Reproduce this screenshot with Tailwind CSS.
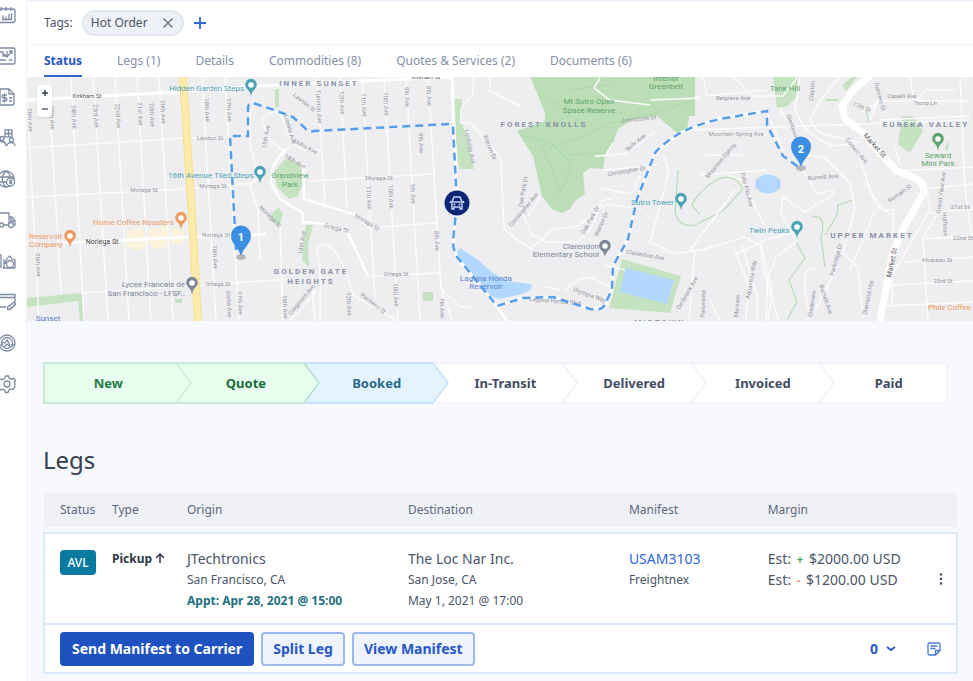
<!DOCTYPE html>
<html lang="en">
  <head>
    <meta charset="UTF-8" />
    <meta name="viewport" content="width=device-width, initial-scale=1.0" />
    <title>Order - Status</title>
    <script src="https://cdn.jsdelivr.net/npm/@tailwindcss/browser@4"></script>
  </head>
  <body class="flex min-h-screen bg-[#f7f9fe] font-['Noto_Sans',sans-serif] text-xs text-[#4a5568]">
    <!-- Sidebar -->
    <nav aria-label="Main" class="w-[27px] shrink-0 overflow-hidden border-r border-[#eef2fb] bg-white pt-[5px] text-[#7c8aa5]">
      <ul class="flex flex-col gap-[21px]">
        <li><a href="#" aria-label="Calendar" class="block h-5"><svg class="-ml-1 size-5" viewBox="0 0 20 20" fill="none" stroke="currentColor" stroke-width="1.3"><rect x="1" y="4" width="18" height="13.500" rx="2" /><path d="M5 2v4M10 2v4M15 2v4M7 14.500v-4M10 14.500v-3M13 14.500v-5.500M15.500 14.500V8M6 14.500h10" /></svg></a></li>
        <li><a href="#" aria-label="Board" class="block h-5"><svg class="-ml-1 size-5" viewBox="0 0 20 20" fill="none" stroke="currentColor" stroke-width="1.3"><rect x="1" y="2" width="18" height="16" rx="1.500" /><path d="M4 6h3v4h4V5M8 8l3 3 5-6M13 5h3v3M4 14h6M13 14h3" /></svg></a></li>
        <li><a href="#" aria-label="Quotes" class="block h-5"><svg class="-ml-1 size-5" viewBox="0 0 20 20" fill="none" stroke="currentColor" stroke-width="1.3"><path d="M4 2h9l5 5v9a2 2 0 0 1-2 2H4zM13 2v5h5M11 8H7.500a1.500 1.500 0 0 0 0 3h2a1.500 1.500 0 0 1 0 3H6M8.500 6.500v9M13 11h3M13 14h3" /></svg></a></li>
        <li><a href="#" aria-label="Customers" class="block h-5"><svg class="-ml-1 size-5" viewBox="0 0 20 20" fill="none" stroke="currentColor" stroke-width="1.3"><rect x="9" y="2" width="7" height="7" /><path d="M9 5.500h7M12.500 2v7" /><circle cx="6" cy="10.500" r="2" /><circle cx="15.500" cy="12" r="2" /><path d="M1 18c0-3 2-4.500 4.500-4.500S10 15 10 18M11 18c0-2 2-3.500 4-3.500s4 1.500 4 3.500" /></svg></a></li>
        <li><a href="#" aria-label="Rates" class="block h-5"><svg class="-ml-1 size-5" viewBox="0 0 20 20" fill="none" stroke="currentColor" stroke-width="1.3"><circle cx="10" cy="10" r="8" /><path d="M2 8h16M2 13h8M10 2c-5 5-5 11 0 16M10 2c3 2 4 4 4 6" /><circle cx="14.500" cy="13" r="4" fill="#fff" /><path d="M16 11.500h-2v1.500h1.500v1.500h-2" /></svg></a></li>
        <li><a href="#" aria-label="Trucks" class="block h-5"><svg class="-ml-1 size-5" viewBox="0 0 20 20" fill="none" stroke="currentColor" stroke-width="1.3"><path d="M13 14V3H1v12h2M8 15h4M13 7h3l3 4v4h-1M15 7v4h4" /><circle cx="5.500" cy="15" r="2" /><circle cx="15" cy="15" r="2.500" /></svg></a></li>
        <li><a href="#" aria-label="Warehouse" class="block h-5"><svg class="-ml-1 size-5" viewBox="0 0 20 20" fill="none" stroke="currentColor" stroke-width="1.3"><path d="M5 3v14M8 8v9M7 17h12M9 13c1-5 3-7 5-8l2 3 3 1v8" /><circle cx="14" cy="13" r="3.500" /></svg></a></li>
        <li><a href="#" aria-label="Forms" class="block h-5"><svg class="-ml-1 size-5" viewBox="0 0 20 20" fill="none" stroke="currentColor" stroke-width="1.3"><path d="M19 10V2.500H2V15h8M2 5.500h17" /><path d="M18 10l2 2-6 5.500h-2.500V15z" fill="currentColor" fill-opacity=".3" /></svg></a></li>
        <li><a href="#" aria-label="Reports" class="block h-5"><svg class="-ml-1 size-5" viewBox="0 0 20 20" fill="none" stroke="currentColor" stroke-width="1.3"><circle cx="11" cy="10" r="8" /><circle cx="11" cy="10" r="5.500" /><path d="M6 9l3 1 2-3 3 5M8 14l3-3 4 3M3 13l4-2M19 12h-4" /></svg></a></li>
        <li><a href="#" aria-label="Settings" class="block h-5"><svg class="-ml-1 size-5" viewBox="0 0 20 20" fill="none" stroke="currentColor" stroke-width="1.3"><path d="M9.500 2h3l.7 2.200 2.300 1 2-1 2 2.300-1 2.200.5 2.600-.5 2.300-1.800 2-2.200-.7-1.800 1.200L12 18.500H9.500l-.8-2.200-2-1.100-2.200.7-1.800-2 1-2.300L3.200 9l-.8-2 1.800-2 2.300.7L8.700 4.400z" /><circle cx="11" cy="10" r="3" /></svg></a></li>
      </ul>
    </nav>

    <main class="min-w-0 flex-1 border-t-2 border-[#f1f4fc]">
      <!-- Tags -->
      <div class="flex h-[42px] items-center bg-white pl-[17px]">
        <span>Tags:</span>
        <span class="ml-[9px] flex h-[26px] items-center gap-3.5 rounded-full border-2 border-[#e1e6ef] bg-[#eef1f7] pr-2 pl-[7px]">
          Hot Order
          <button type="button" aria-label="Remove Hot Order">
            <svg class="size-3" viewBox="0 0 12 12" stroke="#64708a" stroke-width="1.4"><path d="M1.500 1.500l9 9M10.500 1.500l-9 9" /></svg>
          </button>
        </span>
        <button type="button" aria-label="Add tag" class="ml-2.5">
          <svg class="size-3" viewBox="0 0 12 12" stroke="#2f66d0" stroke-width="1.800"><path d="M6 0v12M0 6h12" /></svg>
        </button>
      </div>

      <!-- Tabs -->
      <div class="mt-0.5 flex h-[31px] gap-[35px] bg-white pl-[17px] text-[#8490a8]">
        <a href="#" class="border-b-2 border-[#3565cb] pt-[7px] font-bold text-[#2456c4]">Status</a>
        <a href="#" class="pt-[7px]">Legs (1)</a>
        <a href="#" class="pt-[7px]">Details</a>
        <a href="#" class="pt-[7px]">Commodities (8)</a>
        <a href="#" class="pt-[7px]">Quotes &amp; Services (2)</a>
        <a href="#" class="pt-[7px]">Documents (6)</a>
      </div>

      <!-- Map -->
      <div class="relative h-[244px] overflow-hidden bg-[#eeeef0]">
        <svg class="h-full w-full font-[Roboto,sans-serif]" viewBox="27 77 946 244" preserveAspectRatio="xMidYMid slice">
          <defs>
            <g id="poi">
              <path d="M0 7.500C-1-.5-5.800 1-5.800-4.500a5.800 5.800 0 0 1 11.600 0C5.800 1 1-.5 0 7.500z" />
              <circle cy="-4" r="2.800" fill="#fff" />
            </g>
            <g id="stop">
              <ellipse cy="1" rx="5" ry="3" fill="#777" opacity=".45" />
              <path d="M0 0C-2-8-10-12-10-20.500a10 10 0 0 1 20 0C10-12 2-8 0 0z" fill="#3b8fe2" />
            </g>
          </defs>

          <!-- parks -->
          <g fill="#c5e3c0">
            <path fill="#bbdeb6" d="M530 76l15 37v8l-28 10 16 25 9 40 10 13 10 4 8-4 5-8 10-7-2-21 7-5 13 1 2-13 8-13 5-14 15-10 24-3 20 17 10-2 2-15h6V76z" />
            <path d="M27 298l55-5 2 28h-4l-2-20-51 6zM773 76h25l-1 20-9 10-11 2zM902 116h11l10 15-5 8-8 14-12-9zM622 259l59 17-11 37-61-5zM454 99h8v22l12 48h-15l-4-40zM286 158l14 6 4 16-6 16-9 3-12-12-3-15zM271 214l8-7 4 7-4 13-7-6zM306 225h7l-5 20 1 22-7-7 2-20zM275 89h4v18h-4zM423 292h10v9h-10zM175 299h7v4h-7zM842 85l10-8h5l-11 14zM826 99h12v2h-12zM945 148l5-8-3 12z" />
          </g>
          <path fill="#fdf2dc" d="M127 230l16-3 3 20-10 4-10-5zM149 229l20-3-2 20-10 4-9-6zM172 228l12 1-2 16-12-3z" />
          <!-- water -->
          <g fill="#b3d8fd">
            <path d="M460 248l17 11 16 14 14 8 23 3q6 5-8 10l-22 5-12-3-15-19-17-24zM625 268l49 12-7 24-47-12z" />
            <ellipse cx="768" cy="184" rx="13" ry="9.500" />
          </g>
          <!-- trails -->
          <g fill="none" stroke="#b9dcb5" stroke-width="1.200">
            <path d="M678 170l-3 42q4 16 20 13l28-14 20-22q-8-16-25-10-20 12-26 26l8 10M812 217q15-3 9 20l4 30M825 235l12-20 1-10 15-5M795 240l10 18-16 22 8 22-10 18M866 108l3 16" />
            <path stroke="#a9d2a5" stroke-dasharray="2 1.500" d="M520 135l20 5 12 30 8 24 12-30-20-20-12-5M550 148l30-10 30-15 40-8 45-15M562 155l40-2M545 100l30 10 50 4M570 90l40-6" />
          </g>

          <!-- minor streets -->
          <g fill="none" stroke="#fbfbfc" stroke-width="1.500">
            <path d="M27 148l159-10 40-1M27 197l159-8 67-6M81 293l108-7 101-7M26 76l13 245M48 76l13 217M71 76l13 245M93 76l15 245M115 76l14 245M137 76l14 245M159 76l14 245M202 76l14 245M225 76l14 245" />
            <path d="M310 181l123-7M367 228l70-5M370 276l70-3M317 76l8 127M340 76l7 133M362 76l13 223M384 76l14 245M406 76l14 245M428 76l13 213 20 18 10 0M441 289l12 32" />
            <path d="M250 110l0 37 9 30-9 8 8 25 2 50M262 121q5-12 18-8l12 30-10 13M262 121l8 20 15 10M292 143l12 7h18M280 225l3 96M315 321l-2-20 0-25M320 321V262q-8-20 8-17 15 10 25 50l45 26M290 321l18-20 8-10" />
            <path d="M490 76l0 15 30 15M473 76v18l-12 15v14h10l30 36 3 70 15 12 12 8 22-20 25-3 28-22 36 5M517 200l15 35 15 7h30l15-15 10-26 12-3M540 196l-12 20M613 143l-8 13h-10l30-2 30-22M604 170l46-4 8-2M600 188l30 6M640 175l-8 18M664 156l5 16-19 70 25 12 30-5 40-12 15 8 5 30 15 50M690 130l280-10M650 100l50-2M703 76l4 20 60-6M605 265l20 5M565 290q20-20 35-8l10 5M560 290l-15-3M707 135l60 0M700 175l67-5M702 155h40" />
            <path d="M650 105l-40-5-16-12 6-10M733 76l20 20h30l14-18M765 108l8 18 10 25M800 76l-5 35 12 20 23 15 25-2 20 60 15 10M840 76l-20 25-10 20 10 12 40 10M800 165l17 29 15-4q5 5-12 12l-15 10-22-15-2 15 15 30-20 15-8 20-2 44M780 110l15 20 10 25 20 3 25 25 5 25-12 45 15 15 5 50M850 270l25-60M863 180l20 30 10 0v25M817 271q-20-12-8 40M838 265l-20 40-12 16" />
            <path d="M860 113l20-12h90M910 76l3 20M960 76l5 115 8 50M880 120l90-4M897 171l76-4M895 145l5 20M880 95l-10 25M922 189l51-5M921 239l52-3M906 262l67-5M891 285l82-4M885 306l88-4M930 213l43-4M925 180l5 30-38 65v30M942 190l-5 25-15 24M923 240l5 81M955 90l-30 0-12 15" />
            <path d="M735 255l30-15 30-8M735 190l-30 40-15 20M727 175l15 5 22 45M735 250l15 40-5 31M710 300l10 21M695 250l-6 70M742 245l15 50 0 26M760 240l12 50-4 31" />
          </g>
          <!-- main streets -->
          <g fill="none" stroke="#fff" stroke-width="3" stroke-linejoin="round">
            <path d="M27 100l152-8 81-6 100-5 92-4 5 126M62 243l127-6 77-3" />
            <path d="M285 149l-12 17-2 17 9 16 23 14v9l24 2 21 9 20 43M303 163l1 36 49 15 17 14M303 222v-9" stroke-width="2.500" />
            <path d="M457 203l-4 40 4 15 40 48 26-8 30-1 37 12 15-2 7-18 1-23 15-27 9-40 18-46 25-20 40-15 47-7M497 306l10 15" />
          </g>
          <path d="M870 76l-17 14-11 16 3 13 18 14 17 20 17 18 20 8q9 5 6 15l-20 35-11 27-5 27-7 38" fill="none" stroke="#fff" stroke-width="7" stroke-linejoin="round" />
          <path d="M183 76l9 140 6 105" fill="none" stroke="#f9df90" stroke-width="8" />
          <path d="M183 76l9 140 6 105" fill="none" stroke="#fdeba9" stroke-width="6" />

          <!-- street names -->
          <g font-size="6" fill="#94979d" text-anchor="middle">
            <text x="87" y="98" fill="#555">Kirkham St</text>
            <text x="426" y="79" fill="#555">Kirkham St</text>
            <text x="210" y="140">Lawton St</text>
            <text x="144" y="192">Moraga St</text>
            <text x="213" y="188">Moraga St</text>
            <text x="379" y="180">Moraga St</text>
            <text x="102" y="244" fill="#444" font-size="7">Noriega St</text>
            <text x="216" y="237">Noriega St</text>
            <text x="218" y="286">Ortega St</text>
            <text x="396" y="276">Ortega St</text>
            <text transform="translate(28 120) rotate(87)">26th Ave</text>
            <text transform="translate(50 118) rotate(87)">25th Ave</text>
            <text transform="translate(72 117) rotate(87)">24th Ave</text>
            <text transform="translate(94 116) rotate(87)">23rd Ave</text>
            <text transform="translate(116 116) rotate(87)">22nd Ave</text>
            <text transform="translate(138 114) rotate(87)">21st Ave</text>
            <text transform="translate(150 115) rotate(87)">20th Ave</text>
            <text transform="translate(161 112) rotate(87)">20th Ave</text>
            <text transform="translate(205 110) rotate(87)">18th Ave</text>
            <text transform="translate(227 110) rotate(87)">17th Ave</text>
            <text transform="translate(36 265) rotate(87)">26th Ave</text>
            <text transform="translate(213 257) rotate(87)">18th Ave</text>
            <text transform="translate(227 304) rotate(87)">Aloha Ave</text>
            <text transform="translate(238 303) rotate(87)">17th Ave</text>
            <text transform="translate(317 107) rotate(87)">Funston Ave</text>
            <text transform="translate(340 103) rotate(87)">12th Ave</text>
            <text transform="translate(362 105) rotate(87)">11th Ave</text>
            <text transform="translate(384 104) rotate(87)">10th Ave</text>
            <text transform="translate(405 97) rotate(87)">9th Ave</text>
            <text transform="translate(427 96) rotate(87)">8th Ave</text>
            <text transform="translate(419 143) rotate(87)">9th Ave</text>
            <text transform="translate(367 198) rotate(87)">11th Ave</text>
            <text transform="translate(389 197) rotate(87)">10th Ave</text>
            <text transform="translate(411 194) rotate(87)">9th Ave</text>
            <text transform="translate(435 241) rotate(87)">8th Ave</text>
            <text transform="translate(394 295) rotate(87)">10th Ave</text>
            <text transform="translate(440 308) rotate(87)">7th Ave</text>
            <text transform="translate(347 304) rotate(87)">12th Ave</text>
            <text transform="translate(283 307) rotate(87)">16th Ave</text>
            <text transform="translate(303 301) rotate(-50)">Cragmont Ave</text>
            <text transform="translate(372 305) rotate(38)">Pacheco St</text>
            <text transform="translate(336 230) rotate(14)">Ortega St</text>
            <text transform="translate(366 224) rotate(30)">Moraga St</text>
            <text transform="translate(303 104) rotate(38)">Lawton St</text>
            <text transform="translate(288 130) rotate(75)">Lomita Ave</text>
            <text transform="translate(304 148) rotate(28)">Aloha Ave</text>
            <text transform="translate(294 163) rotate(30)">14th Ave</text>
            <text transform="translate(268 137) rotate(-80)">15th Ave</text>
            <text transform="translate(269 218) rotate(45)">Noriega St</text>
            <text transform="translate(304 243) rotate(-82)">14th Ave</text>
            <text transform="translate(468 147) rotate(78)">Locksley Ave</text>
            <text transform="translate(488 148) rotate(68)">Warren Dr</text>
            <text transform="translate(525 211) rotate(-50)">Christopher Ave</text>
            <text transform="translate(525 192) rotate(-80)">Oak Park Dr</text>
            <text transform="translate(592 221) rotate(-60)">Oak Park Dr</text>
            <text transform="translate(603 225) rotate(-65)">Warren Dr</text>
            <text transform="translate(639 121) rotate(-6)">Johnstone Dr</text>
            <text transform="translate(637 144) rotate(-40)">Behr Ave</text>
            <text transform="translate(627 173) rotate(-10)">Christopher Dr</text>
            <text transform="translate(645 257) rotate(10)">Clarendon Ave</text>
            <text transform="translate(589 297) rotate(20)">Olympia Way</text>
            <text transform="translate(555 303) rotate(5)">Laguna Honda Blvd</text>
            <text transform="translate(689 294) rotate(-60)">Dellbrook Ave</text>
            <text transform="translate(722 162) rotate(-50)">Mountain Spring</text>
            <text x="736" y="136">Mountain Spring Ave</text>
            <text x="733" y="100">Belgrave Ave</text>
            <text transform="translate(745 190) rotate(75)">Palo Alto Ave</text>
            <text transform="translate(791 128) rotate(70)">Glenbrook</text>
            <text transform="translate(814 91) rotate(-85)">Clayton</text>
            <text transform="translate(823 179) rotate(-5)">Burnett Ave</text>
            <text transform="translate(855 152) rotate(50)">Corbett Ave</text>
            <text transform="translate(878 97) rotate(75)">Danvers St</text>
            <text transform="translate(861 109) rotate(20)">17th St</text>
            <text x="902" y="98">Caselli Ave</text>
            <text x="925" y="105">Thorp Ln</text>
            <text transform="translate(901 195) rotate(-35)">Romain St</text>
            <text transform="translate(943 193) rotate(-82)">Grand View Ave</text>
            <text transform="translate(943 224) rotate(87)">Hoffman</text>
            <text x="960" y="209">21st St</text>
            <text x="963" y="240">22nd St</text>
            <text x="937" y="262">Alvarado St</text>
            <text x="943" y="283">23rd St</text>
            <text transform="translate(753 280) rotate(-80)">Aquavista Way</text>
            <text transform="translate(838 260) rotate(-75)">Parkridge Dr</text>
            <text transform="translate(824 300) rotate(72)">Burnett Ave</text>
            <text transform="translate(814 304) rotate(-82)">Gladeview</text>
            <text transform="translate(870 298) rotate(-78)">Diamond Hts</text>
            <text transform="translate(739 306) rotate(-85)">Marview</text>
            <text transform="translate(705 304) rotate(-88)">Panorama</text>
            <g fill="#555" font-size="7">
              <text transform="translate(873 147) rotate(48)">Market St</text>
              <text transform="translate(894 263) rotate(-78)">Market St</text>
            </g>
          </g>

          <!-- districts -->
          <g font-size="8" font-weight="700" fill="#8a92aa" text-anchor="middle" class="tracking-[2px]">
            <text x="319" y="86">INNER SUNSET</text>
            <text x="311" y="274">GOLDEN GATE</text>
            <text x="311" y="284">HEIGHTS</text>
            <text x="544" y="127">FOREST KNOLLS</text>
            <text x="872" y="238">UPPER MARKET</text>
            <text x="926" y="127">EUREKA VALLEY</text>
            <text x="660" y="325">MIDTOWN</text>
          </g>

          <!-- places -->
          <g font-size="8" fill="#4da3b5">
            <text x="169" y="91">Hidden Garden Steps</text>
            <text x="168" y="178">16th Avenue Tiled Steps</text>
            <text x="631" y="205">Sutro Tower</text>
            <text x="749" y="233">Twin Peaks</text>
            <use href="#poi" x="251" y="89" />
            <use href="#poi" x="260" y="176" />
            <use href="#poi" x="681" y="203" />
            <use href="#poi" x="797" y="231" />
          </g>
          <g font-size="8" fill="#ec9a62">
            <text x="93" y="225">Home Coffee Roasters</text>
            <text x="29" y="239">Reservoir</text>
            <text x="29" y="247">Company</text>
            <text x="928" y="310">Philz Coffee</text>
            <use href="#poi" x="181" y="222" />
            <use href="#poi" x="70" y="240" />
          </g>
          <g font-size="8" fill="#7d879a" text-anchor="end">
            <text x="185" y="287">Lycee Francais de</text>
            <text x="185" y="296">San Francisco - LFSF..</text>
            <text x="599" y="249">Clarendon</text>
            <text x="599" y="257">Elementary School</text>
            <use href="#poi" x="192" y="287" />
            <use href="#poi" x="605" y="250" />
          </g>
          <g font-size="8" fill="#5ea56c" text-anchor="middle">
            <text x="290" y="178">Grandview</text>
            <text x="290" y="187">Park</text>
            <text x="589" y="104">Mt Sutro Open</text>
            <text x="589" y="113">Space Reserve</text>
            <text x="666" y="81">Interior</text>
            <text x="666" y="89">Greenbelt</text>
            <text x="785" y="91">Tank Hill</text>
            <text x="938" y="158">Seward</text>
            <text x="938" y="166">Mini Park</text>
            <use href="#poi" x="938" y="143" />
          </g>
          <g font-size="8" fill="#5a7fd0" text-anchor="middle">
            <text x="486" y="281">Laguna Honda</text>
            <text x="486" y="289">Reservoir</text>
            <text x="48" y="321">Sunset</text>
          </g>

          <!-- route -->
          <path d="M236 250l-6-114h18v-28q0-5 5-5l24 8 16 6 12 11q3 4 9 3l136-7q3 0 3 4l4 75-4 38q0 8 4 16l40 49 26-8 30-1 37 12q12 2 15-4l7-16 1-23 15-27 9-40 18-46q6-8 25-20 18-9 40-14l47-8v14l16 31 17 12" fill="none" stroke="#549eec" stroke-width="2.500" stroke-dasharray="8 5" />
          <circle cx="457" cy="203" r="12.500" fill="#0c2577" />
          <path d="M452 209v-7l2-5h6l2 5v7h-2v-2h-6v2zM451 201l-1 2M463 201l1 2M453 202h8" fill="none" stroke="#c4d2f2" stroke-width="1.500" />
          <circle cx="454.500" cy="204.500" r="1" fill="#c4d2f2" />
          <circle cx="459.500" cy="204.500" r="1" fill="#c4d2f2" />
          <g font-size="11" font-weight="700" fill="#fff" text-anchor="middle">
            <use href="#stop" x="241" y="256" />
            <text x="241" y="241">1</text>
            <use href="#stop" x="801" y="167" />
            <text x="801" y="153">2</text>
          </g>
        </svg>
        <!-- Zoom control -->
        <div class="absolute top-2 left-2.5 flex w-[15px] flex-col rounded-sm bg-white shadow">
          <button type="button" aria-label="Zoom in" class="grid h-4 place-items-center"><svg class="size-1.5" viewBox="0 0 6 6" stroke="#333c4e" stroke-width="1.500"><path d="M3 0v6M0 3h6" /></svg></button>
          <button type="button" aria-label="Zoom out" class="grid h-4 place-items-center"><svg class="size-1.5" viewBox="0 0 6 6" stroke="#5a6477" stroke-width="1.500"><path d="M0 3h6" /></svg></button>
        </div>
      </div>

      <!-- Progress -->
      <ol class="mt-[41px] mr-[25px] ml-4 grid h-[42px] grid-cols-[1.03fr_repeat(6,1fr)] text-center text-[13px] leading-[38px] font-bold text-[#414b63]">
        <li class="relative z-60 border-2 border-r-0 border-[#c5ead5] bg-[#e8ffef] pr-1 text-[#257a45]">New
          <svg class="absolute -top-0.5 left-full h-[42px] w-4" viewBox="0 0 16 42"><path d="M0 1l15 20L0 41z" fill="#e8ffef" /><path d="M0 1l15 20L0 41" fill="none" stroke="#c5ead5" stroke-width="1.500" /></svg>
        </li>
        <li class="relative z-50 border-y-2 border-[#c5ead5] bg-[#e8ffef] pl-3 text-[#1a6a3a]">Quote
          <svg class="absolute -top-0.5 left-full h-[42px] w-4" viewBox="0 0 16 42"><path d="M0 1l15 20L0 41z" fill="#e8ffef" /><path d="M0 1l15 20L0 41" fill="none" stroke="#b4dfcb" stroke-width="1.500" /></svg>
        </li>
        <li class="relative z-40 border-y-2 border-[#c5e2fd] bg-[#e4f4fe] pl-4 text-[#27698a]">Booked
          <svg class="absolute -top-0.5 left-full h-[42px] w-4" viewBox="0 0 16 42"><path d="M0 1l15 20L0 41z" fill="#e4f4fe" /><path d="M0 1l15 20L0 41" fill="none" stroke="#c5e2fd" stroke-width="1.500" /></svg>
        </li>
        <li class="relative z-30 border-y-2 border-[#f1f4fa] bg-white pl-4">In-Transit
          <svg class="absolute -top-0.5 left-full h-[42px] w-4" viewBox="0 0 16 42"><path d="M0 1l15 20L0 41z" fill="#fff" /><path d="M0 1l15 20L0 41" fill="none" stroke="#eef1f7" stroke-width="1.500" /></svg>
        </li>
        <li class="relative z-20 border-y-2 border-[#f1f4fa] bg-white pl-4">Delivered
          <svg class="absolute -top-0.5 left-full h-[42px] w-4" viewBox="0 0 16 42"><path d="M0 1l15 20L0 41z" fill="#fff" /><path d="M0 1l15 20L0 41" fill="none" stroke="#eef1f7" stroke-width="1.500" /></svg>
        </li>
        <li class="relative z-10 border-y-2 border-[#f1f4fa] bg-white pl-4">Invoiced
          <svg class="absolute -top-0.5 left-full h-[42px] w-4" viewBox="0 0 16 42"><path d="M0 1l15 20L0 41z" fill="#fff" /><path d="M0 1l15 20L0 41" fill="none" stroke="#eef1f7" stroke-width="1.500" /></svg>
        </li>
        <li class="border-2 border-l-0 border-[#f1f4fa] bg-white pl-3">Paid</li>
      </ol>

      <!-- Legs -->
      <section class="mt-[38px] mr-[15px] ml-4">
        <h1 class="text-2xl leading-9 text-[#363f4f]">Legs</h1>
        <table class="mt-[15px] w-full table-fixed border-collapse text-left">
          <thead>
            <tr class="h-[34px] bg-[#eff1f6] text-[#5d6880]">
              <th scope="col" class="w-[68px] pl-4 font-normal">Status</th>
              <th scope="col" class="w-[75px] font-normal">Type</th>
              <th scope="col" class="w-[24.2%] font-normal">Origin</th>
              <th scope="col" class="w-[24.2%] font-normal">Destination</th>
              <th scope="col" class="w-[15.2%] font-normal">Manifest</th>
              <th scope="col" class="font-normal">Margin</th>
              <th scope="col" class="w-[30px]"><span class="sr-only">Actions</span></th>
            </tr>
            <tr class="h-1.5"></tr>
          </thead>
          <tbody class="bg-white">
            <tr class="h-[91px] border-2 border-[#dbe9fe] align-top">
              <td class="pt-4 pl-[15px]"><span class="flex h-[25px] w-9 items-center justify-center rounded-sm bg-[#087a9f] font-medium text-white">AVL</span></td>
              <td class="pt-[17px] font-bold whitespace-nowrap text-[#2f3747]">
                Pickup
                <svg class="inline size-2.5 align-baseline" viewBox="0 0 10 10" fill="none" stroke="currentColor" stroke-width="1.500"><path d="M5 10V1M1 5l4-4 4 4" /></svg>
              </td>
              <td class="pt-3.5 leading-[21px]">
                <p class="text-sm leading-[21px]">JTechtronics</p>
                <p>San Francisco, CA</p>
                <p class="font-bold text-[#24707f]">Appt: Apr 28, 2021 @ 15:00</p>
              </td>
              <td class="pt-3.5 leading-[21px]">
                <p class="text-sm leading-[21px]">The Loc Nar Inc.</p>
                <p>San Jose, CA</p>
                <p>May 1, 2021 @ 17:00</p>
              </td>
              <td class="pt-3.5 leading-[21px]">
                <p class="text-sm leading-[21px]"><a href="#" class="text-[#2f66d8]">USAM3103</a></p>
                <p>Freightnex</p>
              </td>
              <td class="pt-3.5 text-sm leading-[21px] whitespace-nowrap">
                <p>Est: <span class="mx-0.5 text-xs font-bold text-[#4fa765]">+</span> $2000.00 USD</p>
                <p>Est: <span class="mx-0.5 text-xs font-bold text-[#e79a70]">-</span> $1200.00 USD</p>
              </td>
              <td class="pl-2 align-middle">
                <button type="button" aria-label="More" class="block">
                  <svg class="h-3.5 w-3" viewBox="0 0 12 14" fill="#4a5568"><circle cx="6" cy="2.500" r="1.300" /><circle cx="6" cy="7" r="1.300" /><circle cx="6" cy="11.500" r="1.300" /></svg>
                </button>
              </td>
            </tr>
            <tr class="h-[49px] border-2 border-[#dbe9fe]">
              <td colspan="7" class="pr-[15px] pl-[15px]">
                <div class="flex items-center gap-[7px] text-sm font-bold text-[#2858c5]">
                  <button type="button" class="h-[34px] rounded-sm bg-[#1d52c0] px-3 text-white">Send Manifest to Carrier</button>
                  <button type="button" class="h-[34px] rounded border-2 border-[#9db8ec] bg-[#eff4ff] px-2.5">Split Leg</button>
                  <button type="button" class="h-[34px] rounded border-2 border-[#9db8ec] bg-[#eff4ff] px-2.5">View Manifest</button>
                  <button type="button" class="ml-auto flex items-center gap-2">
                    0
                    <svg class="h-1.5 w-2.5" viewBox="0 0 10 6" fill="none" stroke="currentColor" stroke-width="2"><path d="M1 1l4 3 4-3" /></svg>
                  </button>
                  <button type="button" aria-label="Notes" class="ml-6">
                    <svg class="size-3.5" viewBox="0 0 14 14" fill="none" stroke="#4a78d4" stroke-width="1.300"><path d="M8.500 13H2.500A1.500 1.500 0 0 1 1 11.500v-9A1.500 1.500 0 0 1 2.500 1h9A1.500 1.500 0 0 1 13 2.500v6zM8.500 13V8.500H13M3.500 4h7M3.500 6.500h5" /></svg>
                  </button>
                </div>
              </td>
            </tr>
          </tbody>
        </table>
      </section>
    </main>
  </body>
</html>
